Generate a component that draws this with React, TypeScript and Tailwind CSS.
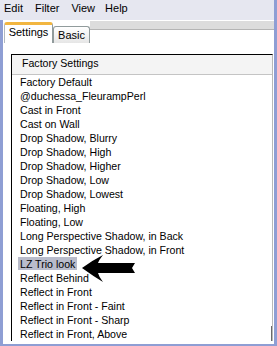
import React from 'react';

const presets: string[] = [
  'Factory Default',
  '@duchessa_FleurampPerl',
  'Cast in Front',
  'Cast on Wall',
  'Drop Shadow, Blurry',
  'Drop Shadow, High',
  'Drop Shadow, Higher',
  'Drop Shadow, Low',
  'Drop Shadow, Lowest',
  'Floating, High',
  'Floating, Low',
  'Long Perspective Shadow, in Back',
  'Long Perspective Shadow, in Front',
  'LZ Trio look',
  'Reflect Behind',
  'Reflect in Front',
  'Reflect in Front - Faint',
  'Reflect in Front - Sharp',
  'Reflect in Front, Above',
];

const menus = [
  { label: 'Edit', cls: 'ml-[4px]' },
  { label: 'Filter', cls: 'ml-[12px]' },
  { label: 'View', cls: 'ml-[12px]' },
  { label: 'Help', cls: 'ml-[10px]' },
];

const App: React.FC = () => {
  const selected = 'LZ Trio look';

  return (
    <div
      className="relative w-[277px] h-[346px] overflow-hidden bg-[#8e9ed4] flex flex-col text-black"
      style={{ fontFamily: '"Liberation Sans", Arial, sans-serif' }}
    >
      {/* menu bar */}
      <div className="h-[24px] mr-[3px] bg-[#e6e7f0] flex items-center text-[11px] pb-[3px]">
        {menus.map((m) => (
          <span key={m.label} className={m.cls}>
            {m.label}
          </span>
        ))}
      </div>

      {/* window body */}
      <div className="flex-1 mx-[3px] mb-[5px] bg-white flex flex-col">
        {/* tabs */}
        <div className="h-[23px] flex items-start text-[11px]">
          <div className="ml-[1px] mt-[2px] w-[49px] h-[21px] bg-white border-t-[3px] border-t-[#f2b640] border-l border-r border-l-[#b0b8c0] border-r-[#919b9c] rounded-t-[3px] flex items-center justify-center pb-[2px]">
            Settings
          </div>
          <div className="mt-[6px] w-[37px] h-[17px] bg-gradient-to-b from-white to-[#e6e6e6] border border-b-0 border-[#919b9c] rounded-t-[3px] flex items-center justify-center pt-[1px]">
            Basic
          </div>
          <div className="flex-1 mt-[1px] h-[9px] bg-[#dcdcdc] border-b border-[#b4b4b4]" />
        </div>

        {/* preset list */}
        <div className="flex-1 pl-[8px] pr-[1px] pt-[11px] pb-[3px] flex">
          <div className="relative flex-1 border-l border-t border-black border-r border-r-[#b8b8b8] overflow-hidden">
            <div className="h-[20px] bg-[#f4f4f4] border-b border-[#c4c4c4] pl-[10px] flex items-center text-[10.6px]">
              Factory Settings
            </div>
            <ul className="text-[10.6px] leading-[14px]">
              {presets.map((p) => (
                <li key={p} className="h-[14px] pl-[6px] whitespace-nowrap">
                  <span className={p === selected ? 'bg-[#b9bccb] px-[2px] inline-block h-[13px]' : 'px-[2px]'}>
                    {p}
                  </span>
                </li>
              ))}
            </ul>
            <div className="absolute right-0 bottom-0 w-px h-[15px] bg-[#6a6a6a]" />
          </div>
        </div>
      </div>

      {/* arrow annotation */}
      <svg className="absolute left-[80px] top-[254px]" width="62" height="30" viewBox="0 0 62 30">
        <path
          d="M2 14 Q13 6 23 1 Q19 6 18 9 L55 9 L52 14 L55 19 L18 19 Q19 23 23 28 Q13 22 2 14 Z"
          fill="#000"
        />
      </svg>
    </div>
  );
};

export default App;
